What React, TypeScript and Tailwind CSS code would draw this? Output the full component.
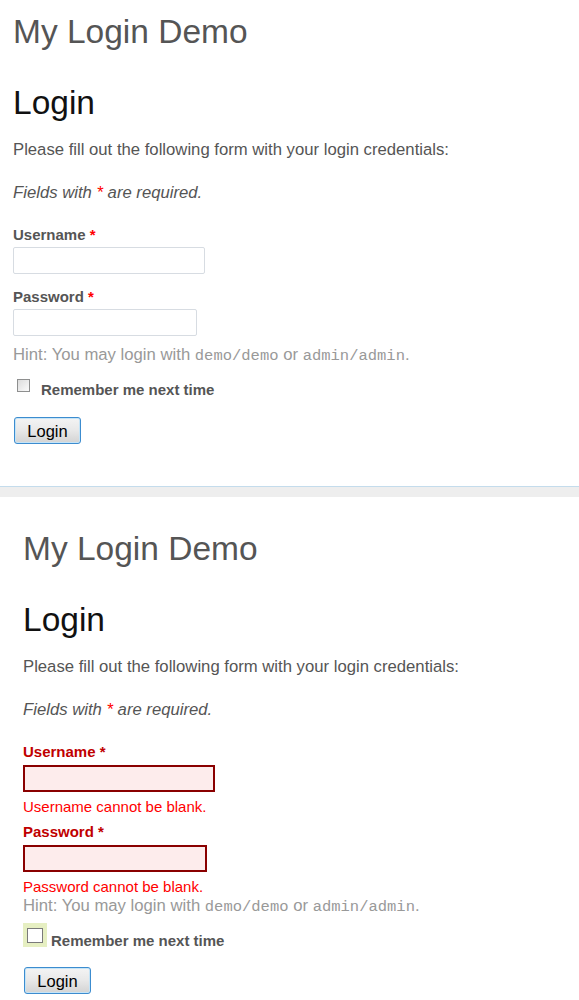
import clsx from "clsx";

interface IFieldProps {
  label: string;
  width: string;
  error?: string;
  first?: boolean;
}

interface IFormProps {
  withErrors?: boolean;
}

const font = "font-['Liberation_Sans',Arial,sans-serif]";
const mono = "font-['Liberation_Mono','Courier_New',monospace]";

const Checkbox = () => (
  <span className="block w-[13px] h-[13px] border border-[#8e8f8f] bg-gradient-to-br from-[#dcdcdc] to-[#fbfbfb]" />
);

const Field = ({ label, width, error, first }: IFieldProps) => (
  <div className={first ? "mt-[23px]" : error ? "mt-[7px]" : "mt-[14px]"}>
    <label
      className={clsx(
        "block text-[15px] leading-[18px] font-bold",
        error ? "text-[#c00000]" : "text-[#555]"
      )}
    >
      {label} <span className={error ? "text-[#c00000]" : "text-[#f00]"}>*</span>
    </label>
    <input
      type="text"
      className={clsx(
        "block h-[27px] outline-none",
        width,
        error
          ? "mt-[4px] border-2 border-[#8a0000] bg-[#fdecec]"
          : "mt-[3px] border border-[#d7dce2] rounded-[2px] bg-white"
      )}
    />
    {error && (
      <div className="mt-[6px] text-[15px] leading-[18px] text-[#f00]">
        {error}
      </div>
    )}
  </div>
);

const LoginForm = ({ withErrors }: IFormProps) => (
  <div
    className={clsx(
      font,
      "bg-white",
      withErrors ? "px-[23px] pt-[32px] pb-[5px]" : "px-[13px] pt-[12px] pb-[42px]"
    )}
  >
    <div className="text-[33.5px] leading-[40px] text-[#555]">My Login Demo</div>
    <h1 className="mt-[31px] text-[33.5px] leading-[40px] text-[#111]">Login</h1>
    <p className="mt-[17px] text-[16.7px] leading-[20px] text-[#555]">
      Please fill out the following form with your login credentials:
    </p>
    <p className="mt-[23px] text-[16.7px] leading-[20px] italic text-[#555]">
      Fields with <span className="text-[#f00]">*</span> are required.
    </p>

    <Field
      first
      label="Username"
      width="w-[192px]"
      error={withErrors ? "Username cannot be blank." : undefined}
    />
    <Field
      label="Password"
      width="w-[184px]"
      error={withErrors ? "Password cannot be blank." : undefined}
    />

    <p
      className={clsx(
        "text-[16.7px] leading-[20px] text-[#999]",
        withErrors ? "mt-0" : "mt-[9px]"
      )}
    >
      Hint: You may login with <span className={clsx(mono, "text-[15.5px]")}>demo/demo</span> or{" "}
      <span className={clsx(mono, "text-[15.5px]")}>admin/admin</span>.
    </p>

    {withErrors ? (
      <div className="mt-[6px] flex items-start">
        <div className="w-[24px] h-[24px] bg-[#e6efc2] flex items-center justify-center">
          <span className="block w-[16px] h-[15px] border border-[#7a7a7a] bg-white" />
        </div>
        <span className="ml-[4px] mt-[9px] text-[15px] leading-[18px] font-bold text-[#555]">
          Remember me next time
        </span>
      </div>
    ) : (
      <div className="mt-[13px] flex items-start">
        <span className="ml-[4px]">
          <Checkbox />
        </span>
        <span className="ml-[11px] mt-[2px] text-[15px] leading-[18px] font-bold text-[#555]">
          Remember me next time
        </span>
      </div>
    )}

    <button
      className={clsx(
        "ml-[1px] w-[67px] h-[27px] rounded-[3px] border border-[#3c8ccf] bg-gradient-to-b from-[#f4f4f4] via-[#e8e8e8] to-[#d3d3d3] text-[16.5px] leading-[20px] text-black shadow-[inset_0_0_0_1px_#c5e4f7]",
        withErrors ? "mt-[17px]" : "mt-[18px]"
      )}
    >
      Login
    </button>
  </div>
);

export default function App() {
  return (
    <div className="w-[579px] h-[1000px] overflow-hidden bg-white">
      <LoginForm />
      <div className="h-px bg-[#c4dcec]" />
      <div className="h-[10px] bg-[#eeeeee]" />
      <LoginForm withErrors />
    </div>
  );
}
